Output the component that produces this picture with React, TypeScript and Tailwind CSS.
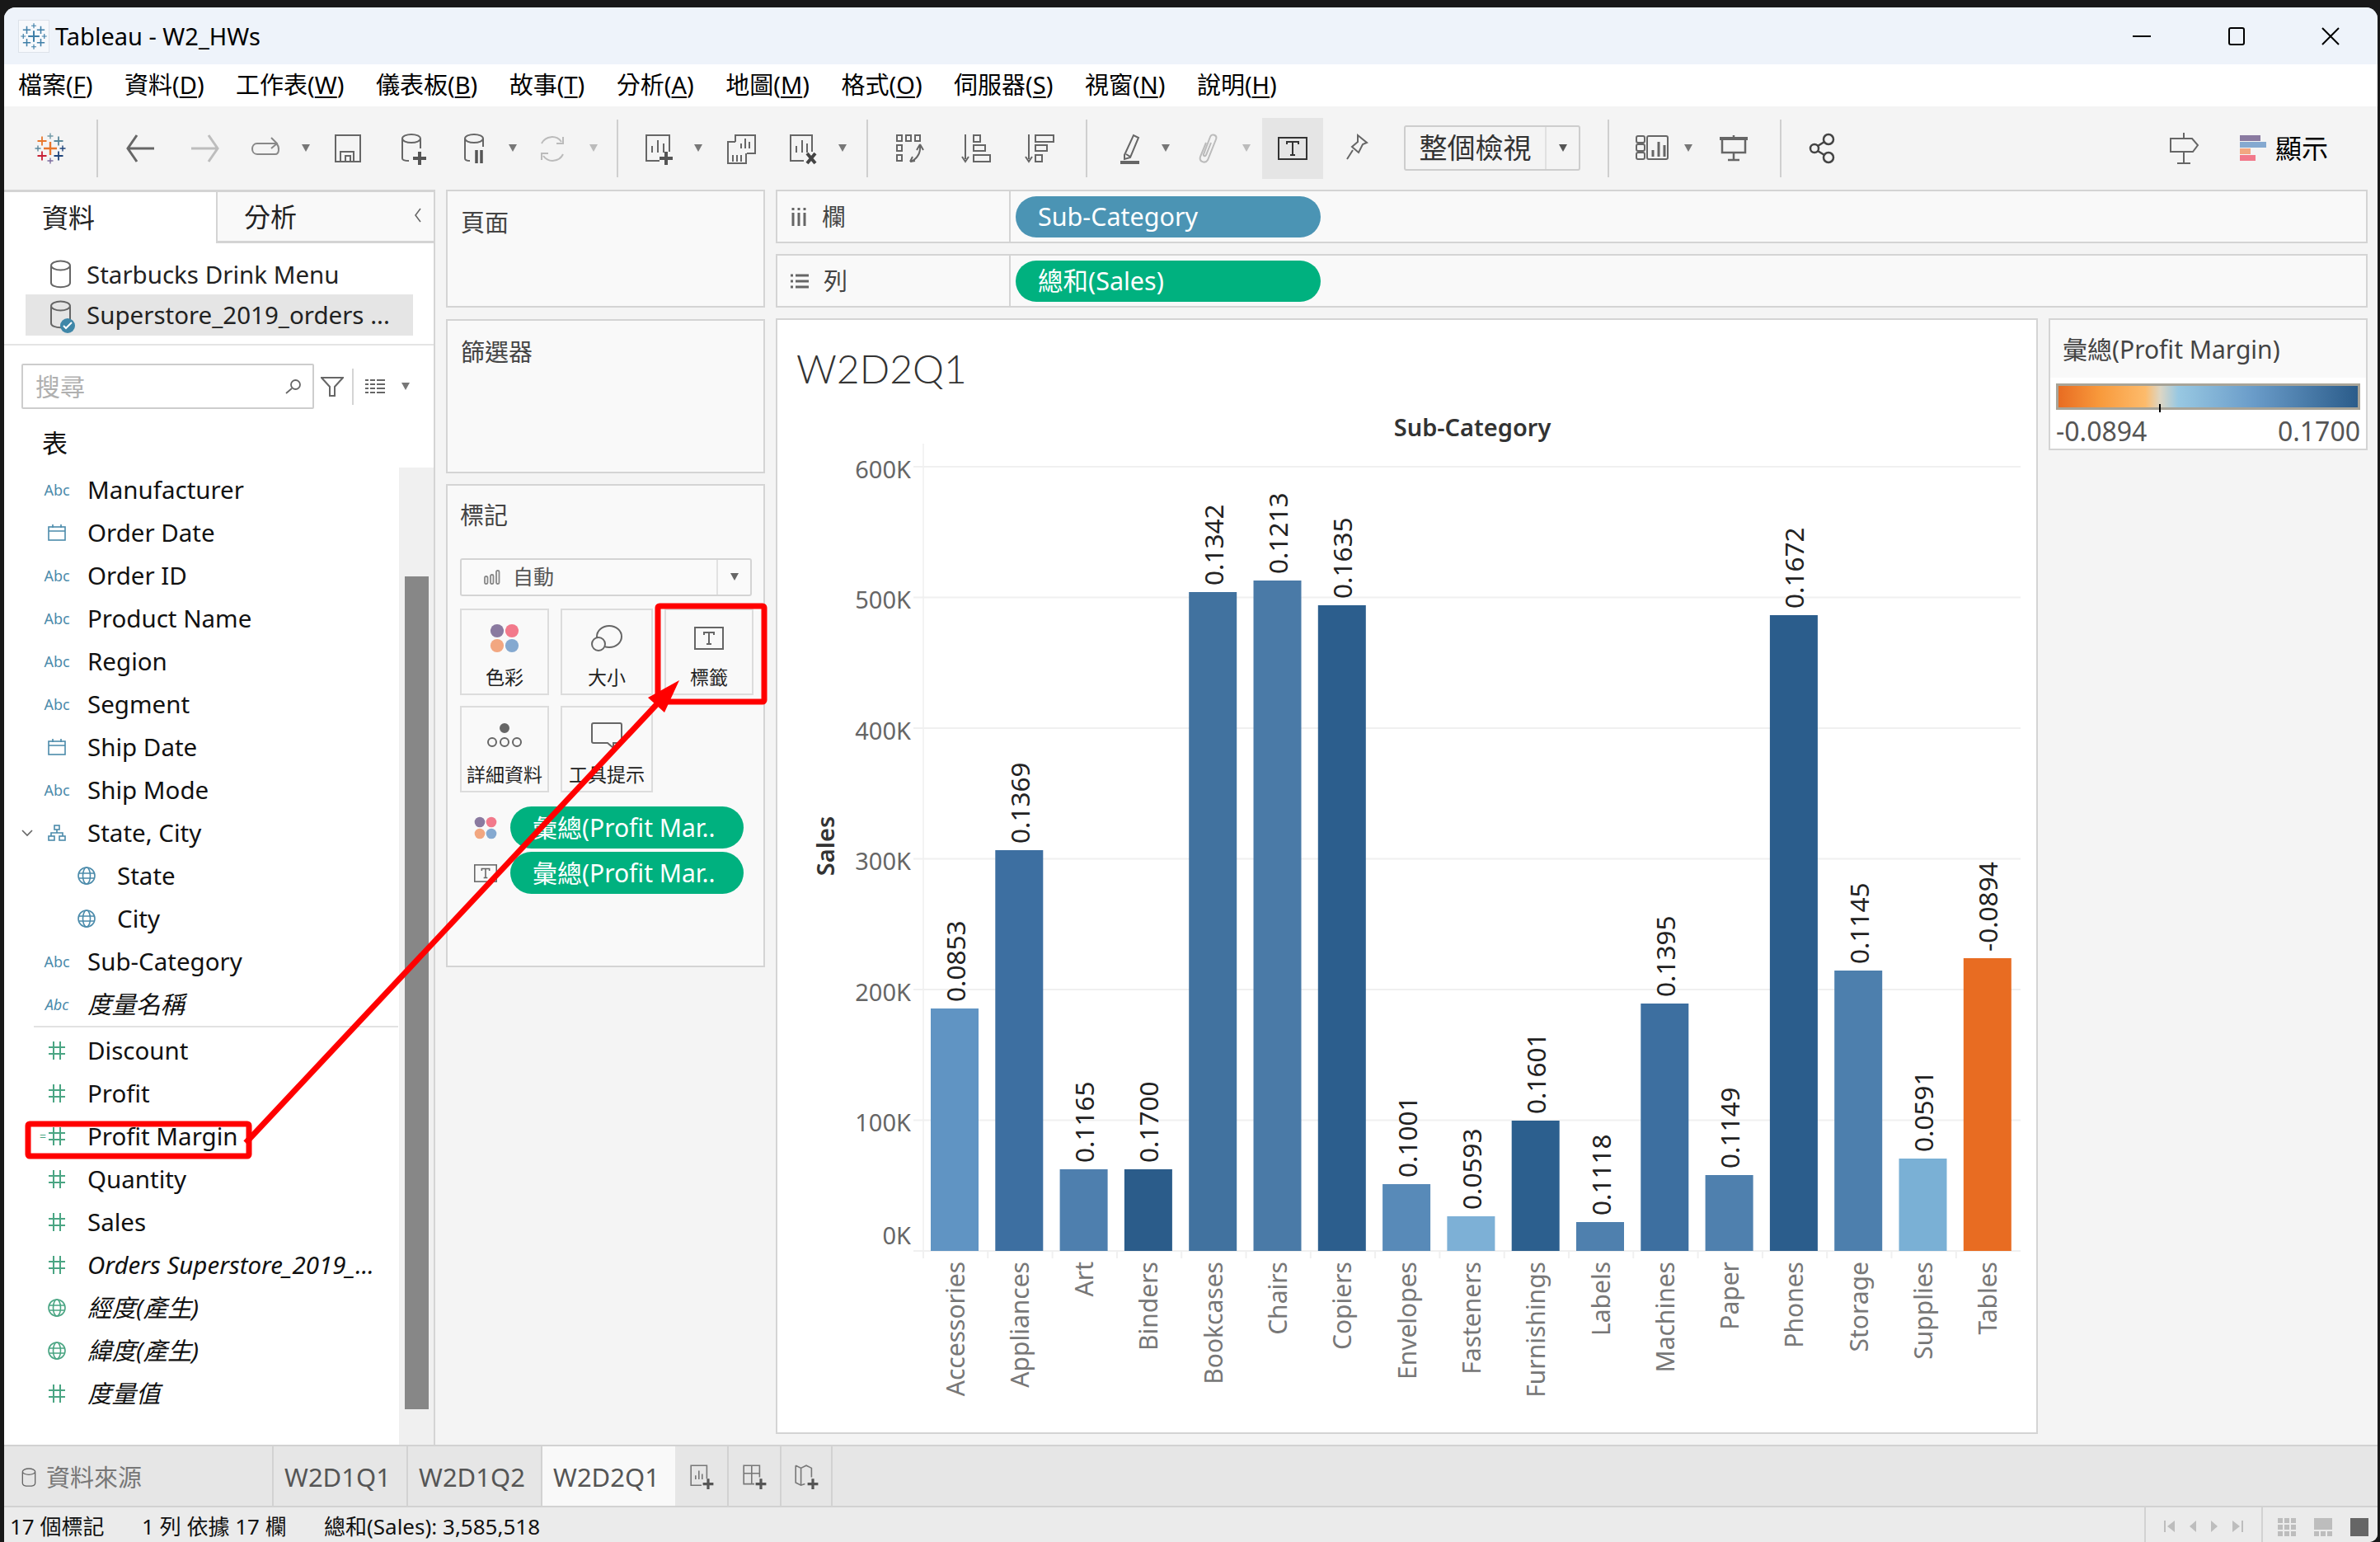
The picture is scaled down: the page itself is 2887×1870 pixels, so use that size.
import React from 'react'

const GRAY = '#666'

const plus = (x: number, y: number, s: number, t: number) =>
    `M${x - t / 2} ${y - s}h${t}v${s - t / 2}h${s - t / 2}v${t}h${-(s - t / 2)}v${s - t / 2}h${-t}v${-(s - t / 2)}h${-(s - t / 2)}v${-t}h${s - t / 2}z`

const Logo: React.FC<{ size: number; mono?: boolean }> = ({ size, mono }) => {
    const pieces: [number, number, number, number, string][] = [
        [20, 20, 8, 2.4, '#e8762b'],
        [20, 5, 3.5, 1.4, '#7099a6'],
        [20, 35, 3.5, 1.4, '#7b6c9e'],
        [5, 20, 3.5, 1.4, '#5b879b'],
        [35, 20, 3.5, 1.4, '#1f447b'],
        [10, 11, 5.5, 1.8, '#e8762b'],
        [30, 11, 5.5, 1.8, '#59879b'],
        [10, 29, 5.5, 1.8, '#c72035'],
        [30, 29, 5.5, 1.8, '#1f447b'],
    ]
    return (
        <svg width={size} height={size} viewBox="0 0 40 40">
            {pieces.map((p, i) => (
                <path key={i} d={plus(p[0], p[1], p[2], p[3])} fill={mono ? '#3f7fa8' : p[4]} />
            ))}
        </svg>
    )
}

const Ic: React.FC<{ className?: string; children: React.ReactNode; stroke?: string; sw?: number | string }> = ({ className, children, stroke = GRAY, sw = 2 }) => (
    <svg className={className} width="40" height="40" viewBox="0 0 40 40" fill="none" stroke={stroke} strokeWidth={sw}>
        {children}
    </svg>
)

const Caret: React.FC<{ className?: string; color?: string }> = ({ className, color = '#777' }) => (
    <svg className={className} width="14" height="12" viewBox="0 0 14 12">
        <path d="M2 1h10L7 10z" fill={color} />
    </svg>
)

const Sep: React.FC<{ className?: string }> = ({ className }) => <div className={`w-[2px] h-[70px] bg-[#cfcfcf] ${className}`} />

const Dots: React.FC<{ size: number }> = ({ size }) => (
    <svg width={size} height={size} viewBox="0 0 40 40">
        <circle cx="10" cy="10" r="9" fill="#8a7aa0" />
        <circle cx="30" cy="10" r="9" fill="#f2798b" />
        <circle cx="10" cy="30" r="9" fill="#f2a781" />
        <circle cx="30" cy="30" r="9" fill="#85a9d0" />
    </svg>
)

const TBox: React.FC<{ w: number; h: number }> = ({ w, h }) => (
    <svg width={w} height={h} viewBox="0 0 36 28" fill="none" stroke={GRAY} strokeWidth="2">
        <rect x="1" y="1" width="34" height="26" />
        <path d="M12 10V7h12v3M18 7v14M15 21h6" />
    </svg>
)

const Cyl: React.FC<{ className?: string; w?: number; h?: number }> = ({ className, w = 27, h = 36 }) => (
    <svg className={className} width={w} height={h} viewBox="0 0 27 36" fill="none" stroke={GRAY} strokeWidth="2">
        <path d="M2 8v20c0 7 23 7 23 0V8" />
        <ellipse cx="13.5" cy="7" rx="11.5" ry="5.5" />
    </svg>
)

const PlusMark = () => <path d="M28 24h4v6h6v4h-6v6h-4v-6h-6v-4h6z" fill="#555" stroke="none" />

const Toolbar = () => (
    <div className="h-[101px] bg-[#f4f4f4] flex items-center shrink-0">
        <div className="ml-[36px] w-[40px]">
            <Logo size={40} />
        </div>
        <Sep className="ml-[36px]" />
        <Ic className="ml-[32px]" sw={3}>
            <path d="M4 20h32M15 4L4 20l11 16" />
        </Ic>
        <Ic className="ml-[37px]" stroke="#bdbdbd" sw={3}>
            <path d="M4 20h32M25 4l11 16-11 16" />
        </Ic>
        <Ic className="ml-[35px]" stroke="#888">
            <path d="M33 14H9c-8 0-8 13 0 13h22c5 0 5-9 2-12M26 7l7 7-7 6" />
        </Ic>
        <Caret className="ml-[21px]" />
        <Ic className="ml-[24px]" stroke={GRAY}>
            <rect x="5" y="4" width="30" height="32" />
            <path d="M11 36V24h16v12M17 36v-7h6v7" />
        </Ic>
        <Ic className="ml-[37px]">
            <path d="M9 8v24c0 2 2 3 8 3M31 8v12" />
            <ellipse cx="20" cy="8" rx="11" ry="5" />
            <PlusMark />
        </Ic>
        <Ic className="ml-[36px]">
            <path d="M9 8v24c0 2 2 3 6 3M31 8v10" />
            <ellipse cx="20" cy="8" rx="11" ry="5" />
            <path d="M23 22v16M29 22v16" strokeWidth="3.5" stroke="#555" />
        </Ic>
        <Caret className="ml-[20px]" />
        <Ic className="ml-[21px]" stroke="#bbb">
            <path d="M31 12A14 14 0 0 0 7 14M9 29a14 14 0 0 0 24-2M33 6v8h-8M7 34v-8h8" />
        </Ic>
        <Caret className="ml-[23px]" color="#bbb" />
        <Sep className="ml-[21px]" />
        <Ic className="ml-[28px]">
            <path d="M22 35H6V4h28v20M13 25v-8M20 25V10M27 25v-11" />
            <PlusMark />
        </Ic>
        <Caret className="ml-[22px]" />
        <Ic className="ml-[25px]">
            <path d="M13 12V4h24v22H27M13 12H4v26h22V26" />
            <path d="M20 20v-6M25 20V8M30 20v-8M10 36v-8M15 36v-8M20 36v-8" />
        </Ic>
        <Ic className="ml-[34px]">
            <path d="M22 35H6V4h26v20M13 25v-8M20 25V10M26 25v-11" />
            <path d="M26 26l10 12M36 26L26 38" strokeWidth="4" stroke="#444" />
        </Ic>
        <Caret className="ml-[22px]" />
        <Sep className="ml-[22px]" />
        <Ic className="ml-[29px]">
            <path d="M6 4h6v7H6zM17 4h6v7h-6zM28 4h6v7h-6zM6 16h6v7H6zM6 28h6v7H6z" />
            <path d="M34 16c1 10-3 16-11 20M34 15l-4 7M34 15l4 7M22 36l6-1M22 36l3-6" />
        </Ic>
        <Ic className="ml-[41px]">
            <path d="M8 3v30M4 30l4 6 4-6" />
            <path d="M18 4h8v8h-8zM18 16h14v7H18zM18 28h20v8H18z" />
        </Ic>
        <Ic className="ml-[37px]">
            <path d="M8 3v30M4 30l4 6 4-6" />
            <path d="M16 4h22v8H16zM16 16h14v7H16zM16 28h8v8h-8z" />
        </Ic>
        <Sep className="ml-[37px]" />
        <Ic className="ml-[31px]">
            <path d="M14 28L25 4l6 3-10 24-7 2zM16 27l5 3" />
            <path d="M9 37h23" strokeWidth="4" />
        </Ic>
        <Caret className="ml-[17px]" />
        <Ic className="ml-[25px]" stroke="#bbb" sw="2">
            <path d="M17 13l-7 17c-2 6 6 9 9 4l10-25c2-5-5-8-7-3l-8 21c-1 2 2 3 3 1l6-15" />
        </Ic>
        <Caret className="ml-[19px]" color="#bbb" />
        <div className="ml-[12px] w-[74px] h-[74px] bg-[#e5e5e5] flex items-center justify-center">
            <svg width="36" height="30" viewBox="0 0 36 28" fill="none" stroke="#333" strokeWidth="2">
                <rect x="1" y="1" width="34" height="26" />
                <path d="M11 9V6h14v3M18 6v16M15 22h6" />
            </svg>
        </div>
        <Ic className="ml-[20px]">
            <path d="M22 4l11 9-5 2-5 10-8-7 7-6zM16 22l-7 11" />
        </Ic>
        <div className="ml-[38px] w-[214px] h-[55px] border-2 border-[#cdcdcd] rounded-[3px] flex items-center">
            <div className="w-[169px] text-center text-[34px] text-[#333]">整個檢視</div>
            <div className="h-full w-[2px] bg-[#e0e0e0]" />
            <Caret className="ml-[13px]" color="#555" />
        </div>
        <Sep className="ml-[33px]" />
        <Ic className="ml-[32px]">
            <rect x="1" y="5" width="10" height="8" rx="2" />
            <rect x="1" y="15" width="10" height="8" rx="2" />
            <rect x="1" y="25" width="10" height="8" rx="2" />
            <rect x="14" y="5" width="25" height="28" rx="2" />
            <path d="M21 30v-8M28 30V12M35 30V16" strokeWidth="3" />
        </Ic>
        <Caret className="ml-[17px]" />
        <Ic className="ml-[28px]">
            <path d="M3 8h34" strokeWidth="4" />
            <path d="M6 9v16h28V9M20 4v4M20 25v9M13 34h14" strokeWidth="2.5" />
        </Ic>
        <Sep className="ml-[36px]" />
        <Ic className="ml-[32px]" stroke="#444" sw="2.5">
            <circle cx="25" cy="9" r="6" />
            <circle cx="25" cy="31" r="6" />
            <circle cx="8" cy="20" r="5" />
            <path d="M12 17l8-5M12 23l8 5" />
        </Ic>
        <Ic className="ml-auto">
            <path d="M19 1v7M19 24v14M11 38h16" />
            <path d="M3 8h26l7 8-6 8H3z" strokeWidth="2" />
        </Ic>
        <svg className="ml-[47px]" width="32" height="32" viewBox="0 0 32 32">
            <rect x="0" y="0" width="25" height="7" fill="#8a7aa0" />
            <rect x="0" y="8" width="32" height="7" fill="#85a9d0" />
            <rect x="0" y="16" width="13" height="7" fill="#f2a781" />
            <rect x="0" y="24" width="19" height="7" fill="#f2798b" />
        </svg>
        <div className="ml-[11px] mr-[60px] text-[32px] text-black">顯示</div>
    </div>
)

const MenuItem: React.FC<{ label: string; k: string }> = ({ label, k }) => (
    <div>
        {label}(<span className="underline underline-offset-3">{k}</span>)
    </div>
)

const menus = [
    ['檔案', 'F'],
    ['資料', 'D'],
    ['工作表', 'W'],
    ['儀表板', 'B'],
    ['故事', 'T'],
    ['分析', 'A'],
    ['地圖', 'M'],
    ['格式', 'O'],
    ['伺服器', 'S'],
    ['視窗', 'N'],
    ['說明', 'H'],
]

type Field = { name: string; icon: 'abc' | 'date' | 'geo' | 'tree' | 'num' | 'gnum' | 'calc'; italic?: boolean; child?: boolean; open?: boolean }

const dims: Field[] = [
    { name: 'Manufacturer', icon: 'abc' },
    { name: 'Order Date', icon: 'date' },
    { name: 'Order ID', icon: 'abc' },
    { name: 'Product Name', icon: 'abc' },
    { name: 'Region', icon: 'abc' },
    { name: 'Segment', icon: 'abc' },
    { name: 'Ship Date', icon: 'date' },
    { name: 'Ship Mode', icon: 'abc' },
    { name: 'State, City', icon: 'tree', open: true },
    { name: 'State', icon: 'geo', child: true },
    { name: 'City', icon: 'geo', child: true },
    { name: 'Sub-Category', icon: 'abc' },
    { name: '度量名稱', icon: 'abc', italic: true },
]

const measures: Field[] = [
    { name: 'Discount', icon: 'num' },
    { name: 'Profit', icon: 'num' },
    { name: 'Profit Margin', icon: 'calc' },
    { name: 'Quantity', icon: 'num' },
    { name: 'Sales', icon: 'num' },
    { name: 'Orders Superstore_2019_...', icon: 'num', italic: true },
    { name: '經度(產生)', icon: 'gnum', italic: true },
    { name: '緯度(產生)', icon: 'gnum', italic: true },
    { name: '度量值', icon: 'num', italic: true },
]

const BLUE = '#4b8bab'
const GREEN = '#4aa583'

const Globe: React.FC<{ color: string }> = ({ color }) => (
    <svg width="22" height="22" viewBox="0 0 22 22" fill="none" stroke={color} strokeWidth="1.6">
        <circle cx="11" cy="11" r="10" />
        <ellipse cx="11" cy="11" rx="4.5" ry="10" />
        <path d="M1 8h20M1 14h20" />
    </svg>
)

const Hash = () => (
    <svg width="22" height="24" viewBox="0 0 22 24" fill="none" stroke={GREEN} strokeWidth="2">
        <path d="M7 1v22M15 1v22M1 8h20M1 16h20" />
    </svg>
)

const FieldIcon: React.FC<{ icon: Field['icon'] }> = ({ icon }) => {
    if (icon === 'abc') return <span className="text-[18px] text-[#4b8bab] leading-none">Abc</span>
    if (icon === 'date')
        return (
            <svg width="22" height="20" viewBox="0 0 22 20" fill="none" stroke={BLUE} strokeWidth="1.6">
                <rect x="1" y="3" width="20" height="16" />
                <path d="M1 8h20M6 0v4M16 0v4" />
            </svg>
        )
    if (icon === 'geo') return <Globe color={BLUE} />
    if (icon === 'gnum') return <Globe color={GREEN} />
    if (icon === 'tree')
        return (
            <svg width="22" height="20" viewBox="0 0 22 20" fill="none" stroke={BLUE} strokeWidth="1.6">
                <rect x="8" y="1" width="6" height="5" />
                <rect x="1" y="14" width="7" height="5" />
                <rect x="14" y="14" width="7" height="5" />
                <path d="M11 6v4M4 14v-4h14v4" />
            </svg>
        )
    if (icon === 'calc')
        return (
            <div className="relative flex items-center justify-center">
                <span className="absolute right-[24px] text-[14px] leading-none text-[#4aa583]">=</span>
                <Hash />
            </div>
        )
    return <Hash />
}

const Row: React.FC<{ f: Field }> = ({ f }) => (
    <div className={`h-[52px] flex items-center text-[29.5px] whitespace-nowrap text-[#111] ${f.italic ? 'italic' : ''}`}>
        <div className="w-[44px] flex justify-center pl-[12px]">
            {f.open && (
                <svg width="14" height="9" viewBox="0 0 14 9" fill="none" stroke="#666" strokeWidth="1.6">
                    <path d="M1 1l6 6 6-6" />
                </svg>
            )}
        </div>
        <div className={`w-[40px] flex justify-center ${f.child ? 'ml-[36px]' : ''}`}>
            <FieldIcon icon={f.icon} />
        </div>
        <div className="ml-[17px]">{f.name}</div>
    </div>
)

const DataPane = () => (
    <div className="w-[523px] bg-white border-r-2 border-[#d4d4d4] flex flex-col shrink-0">
        <div className="h-[65px] flex text-[32px] text-[#222] border-t-[3px] border-[#d4d4d4] shrink-0">
            <div className="w-[257px] flex items-center pl-[46px]">資料</div>
            <div className="flex-1 bg-[#f9f9f9] border-l-2 border-b-[3px] border-[#d4d4d4] flex items-center pl-[32px] relative">
                分析
                <svg className="absolute right-[14px] top-[18px]" width="10" height="20" viewBox="0 0 10 20" fill="none" stroke="#666" strokeWidth="1.6">
                    <path d="M8 2L2 10l6 8" />
                </svg>
            </div>
        </div>
        <div className="h-[124px] border-b-2 border-[#e4e4e4] pt-[15px] shrink-0">
            <div className="h-[46px] flex items-center text-[29.5px] text-[#222] pl-[55px] whitespace-nowrap">
                <Cyl />
                <div className="ml-[18px]">Starbucks Drink Menu</div>
            </div>
            <div className="h-[50px] ml-[26px] w-[470px] mt-[1px] bg-[#e5e5e5] flex items-center pl-[29px] text-[29.5px] text-[#222] whitespace-nowrap">
                <div className="relative">
                    <Cyl />
                    <div className="absolute -right-[4px] -bottom-[4px] w-[18px] h-[18px] rounded-full bg-[#3f87a8] flex items-center justify-center">
                        <svg width="12" height="10" viewBox="0 0 12 10" fill="none" stroke="#fff" strokeWidth="2">
                            <path d="M1 5l3 3 7-7" />
                        </svg>
                    </div>
                </div>
                <div className="ml-[18px]">Superstore_2019_orders ...</div>
            </div>
        </div>
        <div className="h-[55px] mt-[22px] flex items-center pl-[21px] shrink-0">
            <div className="w-[355px] h-[55px] border-2 border-[#cdcdcd] rounded-[2px] flex items-center justify-between pl-[15px] pr-[13px]">
                <span className="text-[30px] text-[#b0b0b0]">搜尋</span>
                <svg width="20" height="20" viewBox="0 0 20 20" fill="none" stroke="#666" strokeWidth="1.8">
                    <circle cx="12.5" cy="7.5" r="5.5" />
                    <path d="M8 12l-7 6" />
                </svg>
            </div>
            <svg className="ml-[8px]" width="28" height="26" viewBox="0 0 28 26" fill="none" stroke="#666" strokeWidth="2">
                <path d="M1 2h26L17 13v11h-6V13z" />
            </svg>
            <div className="ml-[10px] w-[2px] h-[44px] bg-[#d4d4d4]" />
            <svg className="ml-[14px]" width="24" height="20" viewBox="0 0 24 20" fill="none" stroke="#666" strokeWidth="2">
                <path d="M0 2h4M6 2h6M14 2h10M0 7h4M6 7h6M14 7h10M0 12h4M6 12h6M14 12h10M0 17h4M6 17h6M14 17h10" />
            </svg>
            <Caret className="ml-[18px]" />
        </div>
        <div className="flex-1 flex min-h-0">
            <div className="flex-1">
                <div className="h-[72px] pt-[10px] pl-[46px] flex items-center text-[31px] text-[#111]">表</div>
                {dims.map((f) => (
                    <Row key={f.name} f={f} />
                ))}
                <div className="h-[2px] bg-[#e2e2e2] ml-[36px] mr-[1px]" />
                <div className="h-[2px]" />
                {measures.map((f) => (
                    <Row key={f.name} f={f} />
                ))}
            </div>
            <div className="w-[42px] mt-[71px] bg-[#f0f0f0] pl-[7px] pt-[132px] shrink-0">
                <div className="w-[29px] h-[1010px] bg-[#878787]" />
            </div>
        </div>
    </div>
)

const Card: React.FC<{ label: string; children: React.ReactNode; className?: string }> = ({ label, children, className }) => (
    <div className={`w-[108px] h-[105px] border-2 border-[#dcdcdc] flex flex-col items-center ${className}`}>
        <div className="h-[68px] flex items-center justify-center">{children}</div>
        <div className="mt-[2px] text-[23px] leading-none text-[#222] whitespace-nowrap">{label}</div>
    </div>
)

const Pill: React.FC<{ children: React.ReactNode }> = ({ children }) => (
    <div className="w-[283px] h-[51px] rounded-full bg-[#00b17f] text-white text-[30px] pl-[27px] flex items-center whitespace-nowrap">{children}</div>
)

const CardsPane = () => (
    <div className="w-[387px] ml-[13px] flex flex-col shrink-0">
        <div className="h-[143px] bg-[#f9f9f9] border-2 border-[#d4d4d4] pl-[16px] pt-[16px] text-[29px] text-[#444]">頁面</div>
        <div className="h-[187px] mt-[14px] bg-[#f9f9f9] border-2 border-[#d4d4d4] pl-[16px] pt-[16px] text-[29px] text-[#444]">篩選器</div>
        <div className="h-[586px] mt-[13px] bg-[#f9f9f9] border-2 border-[#d4d4d4] pl-[15px] pt-[16px]">
            <div className="text-[29px] text-[#444] leading-[40px]">標記</div>
            <div className="mt-[32px] w-[354px] h-[46px] bg-[#fafafa] border-2 border-[#d4d4d4] rounded-[3px] flex items-center text-[25px] text-[#555]">
                <svg className="ml-[27px]" width="20" height="18" viewBox="0 0 20 18" fill="none" stroke="#888" strokeWidth="1.8">
                    <rect x="1" y="8" width="3.5" height="9" rx="1.5" />
                    <rect x="8" y="6" width="3.5" height="11" rx="1.5" />
                    <rect x="15" y="1" width="3.5" height="16" rx="1.5" />
                </svg>
                <div className="ml-[15px] w-[247px]">自動</div>
                <div className="h-full w-[2px] bg-[#e2e2e2]" />
                <Caret className="ml-[13px]" color="#666" />
            </div>
            <div className="mt-[15px] flex gap-[14px]">
                <Card label="色彩">
                    <Dots size={36} />
                </Card>
                <Card label="大小" className="w-[112px]">
                    <svg width="40" height="34" viewBox="0 0 40 34" fill="none" stroke={GRAY} strokeWidth="2">
                        <ellipse cx="23" cy="15" rx="15" ry="13" />
                        <circle cx="10" cy="24" r="8" fill="#f9f9f9" />
                    </svg>
                </Card>
                <Card label="標籤" className="w-[106px]">
                    <TBox w={36} h={28} />
                </Card>
            </div>
            <div className="mt-[13px] flex gap-[14px]">
                <Card label="詳細資料">
                    <svg width="42" height="30" viewBox="0 0 42 30" fill="none" stroke={GRAY} strokeWidth="2">
                        <circle cx="21" cy="6" r="5" fill="#666" />
                        <circle cx="6" cy="23" r="5" />
                        <circle cx="21" cy="23" r="5" />
                        <circle cx="36" cy="23" r="5" />
                    </svg>
                </Card>
                <Card label="工具提示" className="w-[112px]">
                    <svg width="38" height="32" viewBox="0 0 38 32" fill="none" stroke={GRAY} strokeWidth="2">
                        <path d="M3 1h32a2 2 0 0 1 2 2v20a2 2 0 0 1-2 2H27v6l-7-6H3a2 2 0 0 1-2-2V3a2 2 0 0 1 2-2z" />
                    </svg>
                </Card>
            </div>
            <div className="mt-[17px] flex items-center">
                <div className="w-[61px] flex justify-center">
                    <Dots size={28} />
                </div>
                <Pill>彙總(Profit Mar..</Pill>
            </div>
            <div className="mt-[4px] flex items-center">
                <div className="w-[61px] flex justify-center">
                    <TBox w={28} h={22} />
                </div>
                <Pill>彙總(Profit Mar..</Pill>
            </div>
        </div>
    </div>
)

const Shelf: React.FC<{ label: string; icon: React.ReactNode; pill: string; color: string; className?: string }> = ({ label, icon, pill, color, className }) => (
    <div className={`h-[65px] bg-[#f9f9f9] border-2 border-[#d4d4d4] flex items-center shrink-0 ${className}`}>
        <div className="w-[283px] h-full border-r-2 border-[#d4d4d4] flex items-center pl-[16px] text-[29px] text-[#444]">
            {icon}
            <span className="ml-[18px]">{label}</span>
        </div>
        <div className={`ml-[6px] w-[370px] h-[50px] rounded-full text-white text-[30.5px] pl-[27px] flex items-center ${color}`}>{pill}</div>
    </div>
)

const bars: [string, number, string, string][] = [
    ['Accessories', 1223, '0.0853', '#6094c3'],
    ['Appliances', 1031, '0.1369', '#3d6fa1'],
    ['Art', 1418, '0.1165', '#4e7fae'],
    ['Binders', 1418, '0.1700', '#2b5c8a'],
    ['Bookcases', 718, '0.1342', '#41729f'],
    ['Chairs', 704, '0.1213', '#4a7aa7'],
    ['Copiers', 734, '0.1635', '#2c5e8d'],
    ['Envelopes', 1436, '0.1001', '#588ab8'],
    ['Fasteners', 1475, '0.0593', '#7db0d6'],
    ['Furnishings', 1359, '0.1601', '#2c5f8e'],
    ['Labels', 1482, '0.1118', '#4f80ae'],
    ['Machines', 1217, '0.1395', '#3d6fa0'],
    ['Paper', 1425, '0.1149', '#4f80ae'],
    ['Phones', 746, '0.1672', '#2b5d8c'],
    ['Storage', 1177, '0.1145', '#4d7fad'],
    ['Supplies', 1405, '0.0591', '#7ab0d5'],
    ['Tables', 1162, '-0.0894', '#e86c22'],
]

const Chart = () => (
    <svg width="1527" height="1238" viewBox="943 498 1527 1238" className="block">
        <text x="1786" y="529" textAnchor="middle" fontSize="29" fontWeight="600" fill="#333">
            Sub-Category
        </text>
        <path d="M1120 538V1525" stroke="#f3f3f3" strokeWidth="2" />
        {[0, 1, 2, 3, 4, 5, 6].map((i) => {
            const y = 566 + i * 158.5
            return <path key={i} d={`M1108 ${y}H2451`} stroke="#f0f0f0" strokeWidth="2" />
        })}
        {['600K', '500K', '400K', '300K', '200K', '100K', '0K'].map((t, i) => (
            <text key={t} x="1105" y={568 + i * 158.5 + (i === 6 ? -22 : 0)} textAnchor="end" dominantBaseline="central" fontSize="29" fill="#666">
                {t}
            </text>
        ))}
        {bars.map((b, i) => {
            const x = 1129 + i * 78.3
            const cx = x + 29
            return (
                <g key={b[0]}>
                    <rect x={x} y={b[1]} width="58" height={1517 - b[1]} fill={b[3]} />
                    <path d={`M${1120 + i * 78.3} 1518v8`} stroke="#f0f0f0" strokeWidth="2" />
                    <text transform={`rotate(-90 ${cx} ${b[1] - 8})`} x={cx} y={b[1] - 8} dominantBaseline="central" fontSize="31.5" fill="#222">
                        {b[2]}
                    </text>
                    <text transform={`rotate(-90 ${cx} 1530)`} x={cx} y="1530" textAnchor="end" dominantBaseline="central" fontSize="30" fill="#777">
                        {b[0]}
                    </text>
                </g>
            )
        })}
        <text transform="rotate(-90 1000 1026)" x="1000" y="1026" textAnchor="middle" dominantBaseline="central" fontSize="29" fontWeight="600" fill="#333">
            Sales
        </text>
    </svg>
)

const Legend = () => (
    <div className="w-[387px] h-[160px] ml-[13px] border-2 border-[#d4d4d4] bg-white shrink-0">
        <div className="h-[70px] bg-[#f9f9f9] flex items-center pl-[15px] text-[30px] text-[#444] whitespace-nowrap">彙總(Profit Margin)</div>
        <div className="mx-[7px] mt-[7px] h-[32px] border-[3px] border-[#a8a498] relative bg-[linear-gradient(90deg,#e86c22_0%,#f89a3c_14%,#fdbb6b_29%,#ddd6c4_34%,#98c8e2_40%,#6a9cc9_65%,#2b5c8a_100%)]">
            <div className="absolute left-[122px] top-[22px] w-[2px] h-[10px] bg-black" />
        </div>
        <div className="mx-[7px] mt-[6px] flex justify-between text-[32px] leading-[40px] text-[#555]">
            <span>-0.0894</span>
            <span>0.1700</span>
        </div>
    </div>
)

const SheetArea = () => (
    <div className="flex-1 ml-[13px] mr-[12px] flex flex-col min-w-0">
        <Shelf
            label="欄"
            color="bg-[#4b94b4]"
            pill="Sub-Category"
            icon={
                <svg width="20" height="22" viewBox="0 0 20 22" fill="none" stroke="#666" strokeWidth="3">
                    <path d="M3 6v16M10 6v16M17 6v16M3 0v3M10 0v3M17 0v3" />
                </svg>
            }
        />
        <Shelf
            label="列"
            color="bg-[#00b17f]"
            pill="總和(Sales)"
            className="mt-[13px]"
            icon={
                <svg width="22" height="20" viewBox="0 0 22 20" fill="none" stroke="#666" strokeWidth="3">
                    <path d="M6 3h16M6 10h16M6 17h16M0 3h3M0 10h3M0 17h3" />
                </svg>
            }
        />
        <div className="mt-[13px] flex items-start">
            <div className="w-[1531px] h-[1353px] bg-white border-2 border-[#d4d4d4] shrink-0">
                <div className="h-[110px] pl-[23px] pt-[24px] text-[48px] leading-[70px] font-light text-[#333] [font-family:Lato,'Noto_Sans',sans-serif]">W2D2Q1</div>
                <Chart />
            </div>
            <Legend />
        </div>
    </div>
)

const Tabs = () => (
    <div className="h-[74px] bg-[#e6e6e6] border-t-2 border-[#d2d2d2] flex shrink-0">
        <div className="w-[325px] flex items-center pl-[21px] pt-[3px] text-[29px] text-[#777]">
            <Cyl w={18} h={24} />
            <span className="ml-[12px]">資料來源</span>
        </div>
        {['W2D1Q1', 'W2D1Q2'].map((t) => (
            <div key={t} className="w-[163px] border-l-2 border-[#d2d2d2] flex items-center justify-center pt-[3px] pr-[6px] text-[31px] text-[#555]">
                {t}
            </div>
        ))}
        <div className="w-[163px] bg-[#f9f9f9] border-l-2 border-[#d2d2d2] flex items-center justify-center pt-[3px] pr-[6px] text-[31px] text-[#555]">W2D2Q1</div>
        <div className="w-[63px] flex items-center justify-center">
            <svg width="32" height="32" viewBox="0 0 40 40" fill="none" stroke="#777" strokeWidth="2">
                <path d="M20 34H4V4h24v20M11 25v-6M16 25V12M21 25v-8" />
                <PlusMark />
            </svg>
        </div>
        <div className="w-[64px] border-l-2 border-[#d2d2d2] flex items-center justify-center">
            <svg width="32" height="32" viewBox="0 0 40 40" fill="none" stroke="#777" strokeWidth="2">
                <path d="M20 32H4V4h24v18M4 16h24M16 4v28" />
                <PlusMark />
            </svg>
        </div>
        <div className="w-[64px] border-x-2 border-[#d2d2d2] flex items-center justify-center">
            <svg width="32" height="32" viewBox="0 0 40 40" fill="none" stroke="#777" strokeWidth="2">
                <path d="M4 4l8 4 8-4 8 4v14M4 4v26l8 4 6-2M12 8v26" />
                <PlusMark />
            </svg>
        </div>
    </div>
)

const Status = () => (
    <div className="flex-1 bg-[#ebebeb] border-t-2 border-[#d2d2d2] flex items-start text-[26px] leading-[30px] text-[#111] whitespace-nowrap">
        <div className="ml-[7px] w-[160px] mt-[8px]">17 個標記</div>
        <div className="w-[221px] mt-[8px]">1 列 依據 17 欄</div>
        <div className="mt-[8px]">總和(Sales): 3,585,518</div>
        <div className="ml-auto h-full w-[2px] bg-[#d2d2d2]" />
        <div className="w-[140px] mt-[15px] flex items-center justify-around px-[14px]">
            <svg width="14" height="16" viewBox="0 0 14 16" fill="#bdbdbd">
                <path d="M0 1h2v14H0zM13 1v14L4 8z" />
            </svg>
            <svg width="10" height="16" viewBox="0 0 10 16" fill="#bdbdbd">
                <path d="M9 1v14L1 8z" />
            </svg>
            <svg width="10" height="16" viewBox="0 0 10 16" fill="#bdbdbd">
                <path d="M1 1v14l8-7z" />
            </svg>
            <svg width="14" height="16" viewBox="0 0 14 16" fill="#bdbdbd">
                <path d="M12 1h2v14h-2zM1 1v14l9-7z" />
            </svg>
        </div>
        <div className="h-full w-[2px] bg-[#d2d2d2]" />
        <div className="ml-[18px] mt-[13px] w-[22px] h-[22px] grid grid-cols-3 gap-[2px]">
            {[1, 2, 3, 4, 5, 6, 7, 8, 9].map((i) => (
                <div key={i} className="bg-[#bdbdbd]" />
            ))}
        </div>
        <div className="ml-[22px] mt-[13px] w-[22px] h-[22px] flex flex-col gap-[2px]">
            <div className="h-[14px] bg-[#bdbdbd]" />
            <div className="h-[6px] grid grid-cols-3 gap-[2px]">
                <div className="bg-[#bdbdbd]" />
                <div className="bg-[#bdbdbd]" />
                <div className="bg-[#bdbdbd]" />
            </div>
        </div>
        <div className="ml-[22px] mr-[11px] mt-[13px] w-[22px] h-[22px] bg-[#666]" />
    </div>
)

export default function App() {
    return (
        <div className="relative w-[2887px] h-[1870px] overflow-hidden bg-[#181818] pt-[9px] pl-[5px] pr-[3px] [font-family:'Noto_Sans','Noto_Sans_CJK_TC',sans-serif]">
            <div className="h-full rounded-t-[14px] rounded-br-[10px] overflow-hidden flex flex-col bg-[#f4f4f4]">
                <div className="h-[69px] bg-[#eef3fa] flex items-center shrink-0">
                    <div className="ml-[17px] w-[38px] h-[40px] bg-[#f7f9fc] border border-[#dde3ea] flex items-center justify-center">
                        <Logo size={34} mono />
                    </div>
                    <div className="ml-[7px] text-[29px] text-black">Tableau - W2_HWs</div>
                    <svg className="ml-auto" width="22" height="4" viewBox="0 0 22 4">
                        <path d="M0 2h22" stroke="#000" strokeWidth="2" />
                    </svg>
                    <svg className="ml-[94px]" width="20" height="22" viewBox="0 0 20 22" fill="none" stroke="#000" strokeWidth="2">
                        <rect x="1" y="1" width="18" height="20" rx="2" />
                    </svg>
                    <svg className="ml-[93px] mr-[46px]" width="22" height="22" viewBox="0 0 22 22" fill="none" stroke="#000" strokeWidth="2">
                        <path d="M1 1l20 20M21 1L1 21" />
                    </svg>
                </div>
                <div className="h-[51px] bg-white flex items-center gap-[38.5px] pl-[17px] pb-[2px] text-[29px] text-black shrink-0">
                    {menus.map((m) => (
                        <MenuItem key={m[0]} label={m[0]} k={m[1]} />
                    ))}
                </div>
                <Toolbar />
                <div className="h-[1522px] flex shrink-0">
                    <DataPane />
                    <CardsPane />
                    <SheetArea />
                </div>
                <Tabs />
                <Status />
            </div>

            <svg className="absolute left-0 top-0 pointer-events-none" width="2887" height="1870" fill="none">
                <rect x="34" y="1363" width="268" height="39" rx="2" stroke="#ff0000" strokeWidth="7" />
                <rect x="798" y="735" width="129" height="116" rx="2" stroke="#ff0000" strokeWidth="7" />
                <path d="M298 1386L808 842" stroke="#ff0000" strokeWidth="7" />
                <path d="M824 825L786 846L806 864z" fill="#ff0000" />
            </svg>
        </div>
    )
}
